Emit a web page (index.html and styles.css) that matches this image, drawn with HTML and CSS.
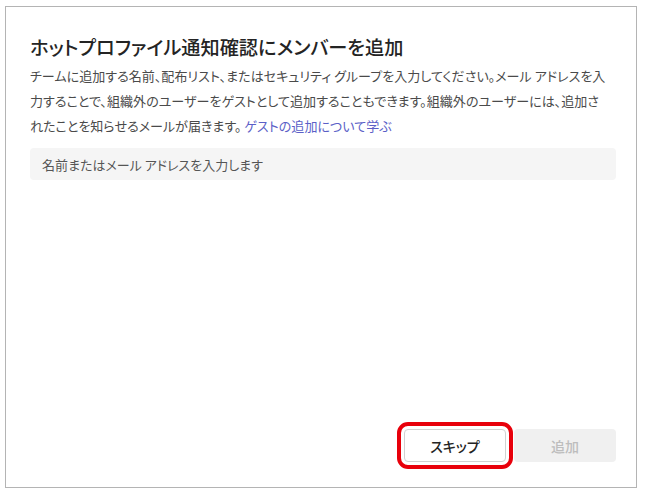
FILE: index.html
```html
<!DOCTYPE html>
<html lang="ja">
<head>
    <meta charset="UTF-8">
    <meta name="viewport" content="width=device-width, initial-scale=1.0">
    <title>メンバーを追加</title>
    <link rel="stylesheet" href="styles.css">
</head>
<body>

    <div class="dialog">
        <h1 class="dialog-title">ホットプロファイル通知確認にメンバーを追加</h1>

        <p class="dialog-text">
            チームに追加する名前、配布リスト、またはセキュリティ グループを入力してください。メール アドレスを入<br>力することで、組織外のユーザーをゲストとして追加することもできます。組織外のユーザーには、追加さ<br>れたことを知らせるメールが届きます。 <a href="#" class="link">ゲストの追加について学ぶ</a>
        </p>

        <input type="text" class="search-input" placeholder="名前またはメール アドレスを入力します">

        <div class="dialog-footer">
            <button class="btn btn-skip">スキップ</button>
            <button class="btn btn-add" disabled>追加</button>
        </div>
    </div>

</body>
</html>
```

FILE: styles.css
```css
body {
    margin: 0;
    background-color: #fff;
    font-family: "Noto Sans CJK JP", "Noto Sans", sans-serif;
    font-feature-settings: "palt";
}

.dialog {
    box-sizing: border-box;
    width: 632px;
    height: 482px;
    margin: 6px 0 0 5px;
    padding: 26px 20px 25px 24px;
    border: 1px solid #b4b4b4;
    display: flex;
    flex-direction: column;
}

.dialog-title {
    margin: 0;
    font-size: 19.2px;
    line-height: 28px;
    font-weight: 500;
    color: #242424;
}

.dialog-text {
    margin: 2px 0 0;
    font-size: 13.05px;
    line-height: 25px;
    color: #4a4a4a;
    white-space: nowrap;
}

.link {
    color: #5b5fc7;
    text-decoration: none;
}

.search-input {
    margin-top: 10px;
    height: 32px;
    padding: 0 12px;
    border: none;
    border-radius: 4px;
    background-color: #f5f5f5;
    font-family: inherit;
    font-feature-settings: "palt";
    font-size: 13px;
    color: #242424;
    outline: none;
}

.search-input::placeholder {
    color: #555;
}

.dialog-footer {
    margin-top: auto;
    display: flex;
    justify-content: flex-end;
    gap: 8px;
}

.btn {
    width: 102px;
    height: 33px;
    border-radius: 4px;
    font-family: inherit;
    font-feature-settings: "palt";
    font-size: 14px;
    font-weight: 500;
}

.btn-skip {
    background-color: #fff;
    border: 1px solid #d1d1d1;
    color: #242424;
    outline: 4px solid #e8000b;
    outline-offset: 3px;
}

.btn-add {
    background-color: #f0f0f0;
    border: none;
    color: #bdbdbd;
}
```
